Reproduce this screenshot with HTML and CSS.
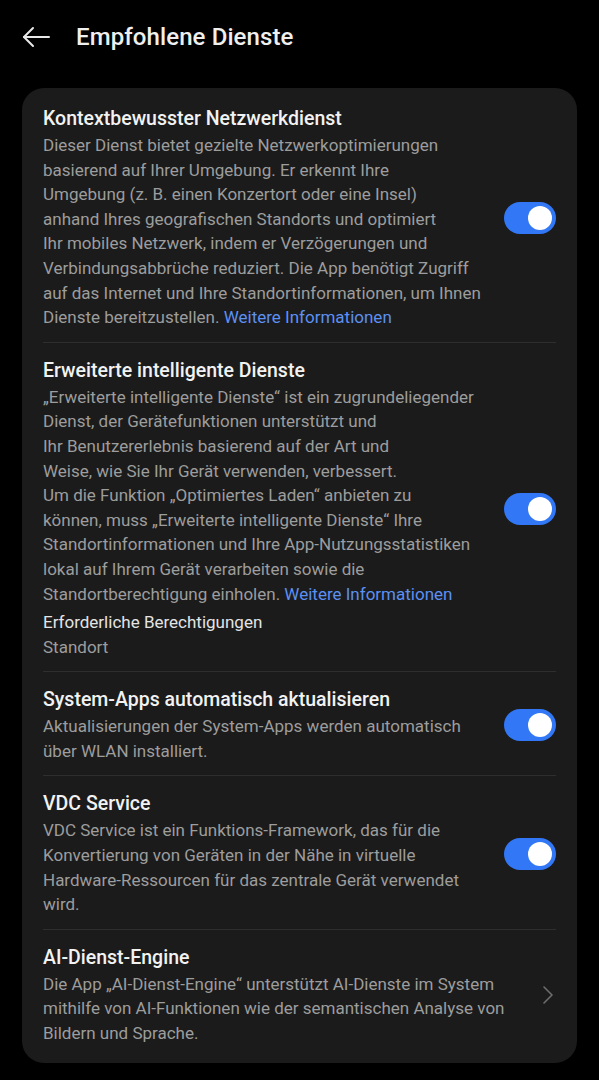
FILE: index.html
```html
<!DOCTYPE html>
<html lang="de">
<head>
    <meta charset="UTF-8">
    <meta name="viewport" content="width=device-width, initial-scale=1.0">
    <title>Empfohlene Dienste</title>
    <link rel="stylesheet" href="styles.css">
</head>
<body>
    <header class="top-bar">
        <button type="button" class="back-button" aria-label="Zurück">
            <svg width="28" height="22" viewBox="0 0 28 22" fill="none" stroke="#e8e8e8" stroke-width="2" stroke-linecap="round" stroke-linejoin="round">
                <path d="M27 11H2"/>
                <path d="M11 2L2 11L11 20"/>
            </svg>
        </button>
        <h1>Empfohlene Dienste</h1>
    </header>

    <div class="card">
        <div class="item">
            <div class="item-text">
                <h2>Kontextbewusster Netzwerkdienst</h2>
                <p class="desc">Dieser Dienst bietet gezielte Netzwerkoptimierungen<br>
                basierend auf Ihrer Umgebung. Er erkennt Ihre<br>
                Umgebung (z.&nbsp;B. einen Konzertort oder eine Insel)<br>
                anhand Ihres geografischen Standorts und optimiert<br>
                Ihr mobiles Netzwerk, indem er Verzögerungen und<br>
                Verbindungsabbrüche reduziert. Die App benötigt Zugriff<br>
                auf das Internet und Ihre Standortinformationen, um Ihnen<br>
                Dienste bereitzustellen. <a href="#">Weitere Informationen</a></p>
            </div>
            <span class="switch on"></span>
        </div>

        <div class="item">
            <div class="item-text">
                <h2>Erweiterte intelligente Dienste</h2>
                <p class="desc">„Erweiterte intelligente Dienste“ ist ein zugrundeliegender<br>
                Dienst, der Gerätefunktionen unterstützt und<br>
                Ihr Benutzererlebnis basierend auf der Art und<br>
                Weise, wie Sie Ihr Gerät verwenden, verbessert.<br>
                Um die Funktion „Optimiertes Laden“ anbieten zu<br>
                können, muss „Erweiterte intelligente Dienste“ Ihre<br>
                Standortinformationen und Ihre App-Nutzungsstatistiken<br>
                lokal auf Ihrem Gerät verarbeiten sowie die<br>
                Standortberechtigung einholen. <a href="#">Weitere Informationen</a></p>
                <p class="perm-title">Erforderliche Berechtigungen</p>
                <p class="desc">Standort</p>
            </div>
            <span class="switch on"></span>
        </div>

        <div class="item">
            <div class="item-text">
                <h2>System-Apps automatisch aktualisieren</h2>
                <p class="desc">Aktualisierungen der System-Apps werden automatisch<br>
                über WLAN installiert.</p>
            </div>
            <span class="switch on"></span>
        </div>

        <div class="item">
            <div class="item-text">
                <h2>VDC Service</h2>
                <p class="desc">VDC Service ist ein Funktions-Framework, das für die<br>
                Konvertierung von Geräten in der Nähe in virtuelle<br>
                Hardware-Ressourcen für das zentrale Gerät verwendet<br>
                wird.</p>
            </div>
            <span class="switch on"></span>
        </div>

        <div class="item">
            <div class="item-text">
                <h2>AI-Dienst-Engine</h2>
                <p class="desc">Die App „AI-Dienst-Engine“ unterstützt AI-Dienste im System<br>
                mithilfe von AI-Funktionen wie der semantischen Analyse von<br>
                Bildern und Sprache.</p>
            </div>
            <svg class="chevron" width="12" height="20" viewBox="0 0 12 20" fill="none" stroke="#6e6e6e" stroke-width="1.6" stroke-linecap="round" stroke-linejoin="round">
                <path d="M2 2L10 10L2 18"/>
            </svg>
        </div>
    </div>
</body>
</html>
```

FILE: styles.css
```css
body { margin: 0; background-color: #000; color: #f0f0f0; font-family: Roboto, "Noto Sans", sans-serif; width: 599px; }
.top-bar { display: flex; align-items: center; height: 74px; padding-left: 22px; }
.back-button { background: none; border: none; padding: 0; width: 54px; height: 30px; display: flex; align-items: center; cursor: pointer; }
.top-bar h1 { margin: 0; font-size: 24px; font-weight: 500; color: #efefef; letter-spacing: 0.1px; }
.card { margin: 14px 22px 0; background-color: #1b1b1b; border-radius: 22px; padding: 3px 21px 5px 21px; }
.item { display: flex; align-items: center; padding: 15px 0 12px; border-bottom: 1px solid #2e2e2e; }
.item:last-child { border-bottom: none; }
.item-text { flex: 1; min-width: 0; }
.item h2 { margin: 0 0 1px; font-size: 19.5px; font-weight: 500; line-height: 26px; color: #f2f2f2; }
.desc { margin: 0; font-size: 17px; line-height: 24.6px; color: #9d9d9d; }
.desc a { color: #5c90f2; text-decoration: none; }
.perm-title { margin: 4px 0 0; font-size: 17px; line-height: 24.6px; color: #e4e4e4; }
.switch { flex: none; width: 52px; height: 32px; border-radius: 16px; background-color: #3277f5; position: relative; margin-left: 8px; }
.switch::after { content: ""; position: absolute; top: 4px; right: 4px; width: 24px; height: 24px; border-radius: 50%; background-color: #fff; }
.chevron { flex: none; margin: 0 2px 0 20px; }
```
